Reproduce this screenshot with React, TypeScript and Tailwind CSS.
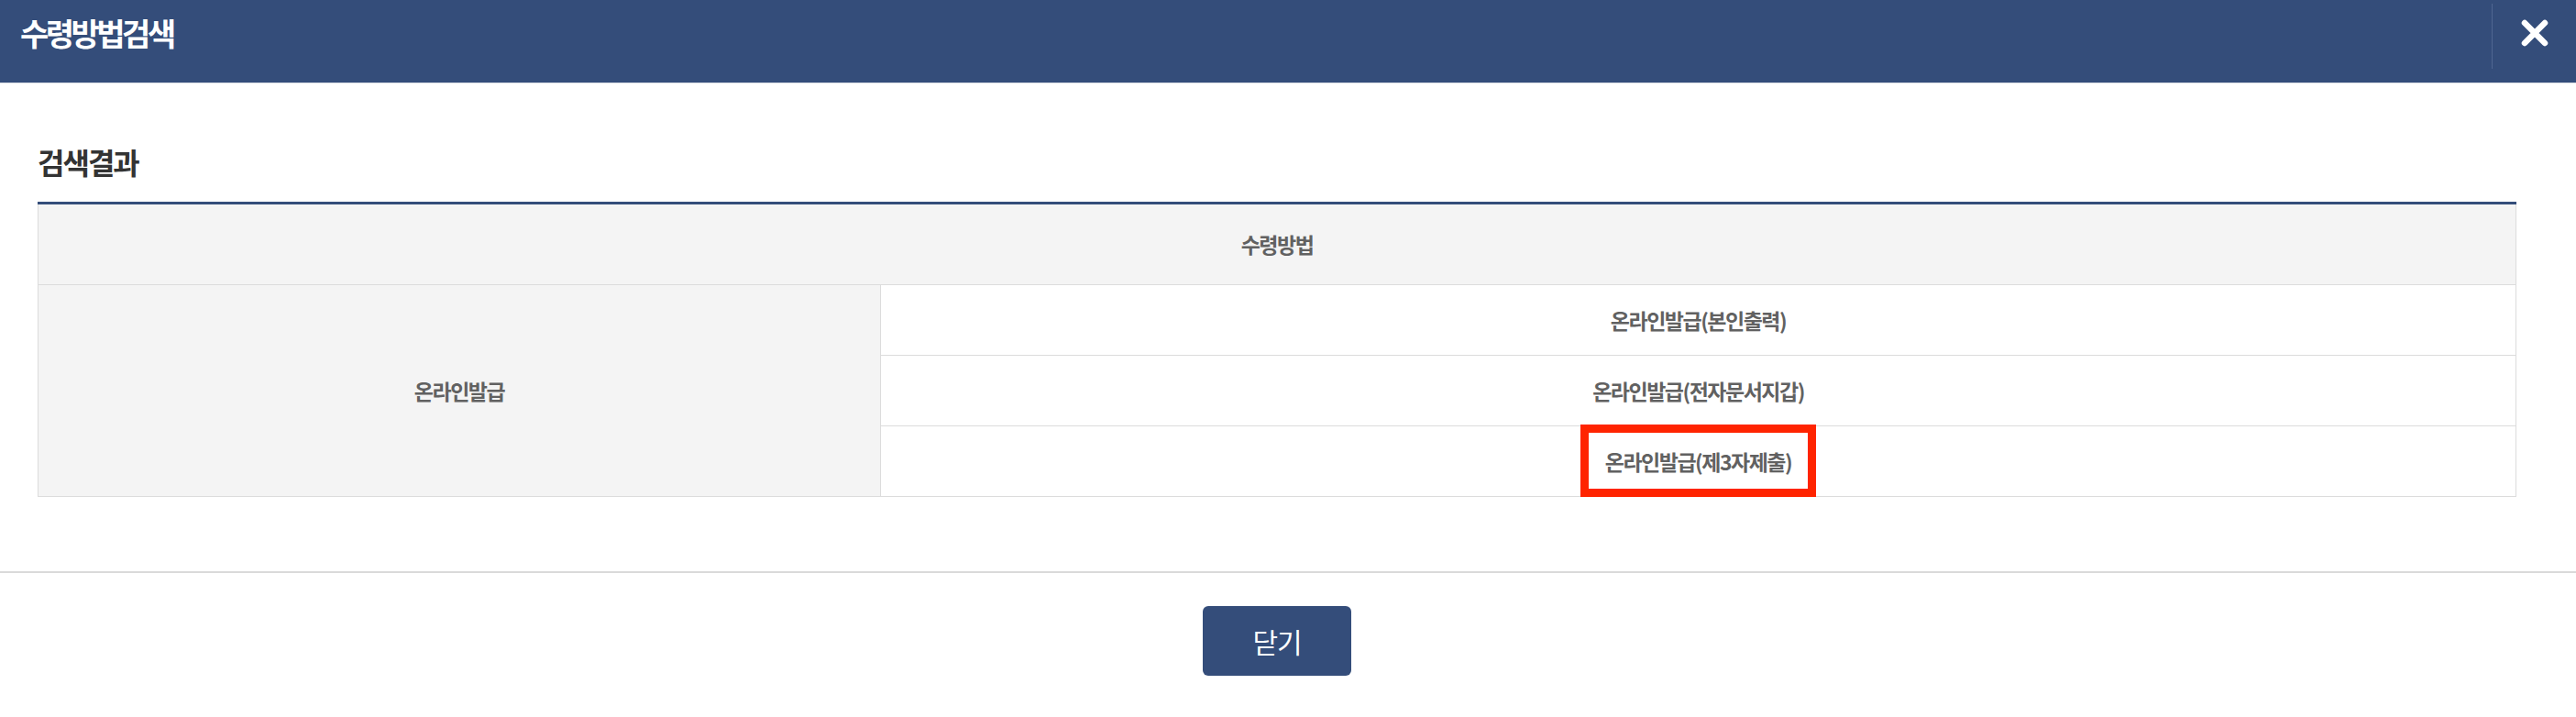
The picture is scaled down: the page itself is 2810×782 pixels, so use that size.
const font = { fontFamily: '"Noto Sans CJK KR", "Noto Sans", sans-serif' }

const methods = ['온라인발급(본인출력)', '온라인발급(전자문서지갑)', '온라인발급(제3자제출)']

function CloseIcon() {
  return (
    <svg width="32" height="32" viewBox="0 0 32 32" fill="none">
      <path d="M5 5L27 27M27 5L5 27" stroke="white" strokeWidth="6.5" strokeLinecap="round" />
    </svg>
  )
}

export default function App() {
  return (
    <div className="flex h-[782px] w-[2810px] flex-col bg-white" style={font}>
      <header className="flex h-[91px] shrink-0 items-start justify-between border-b border-[#d9dde4] bg-[#344d7a]">
        <h1 className="pl-[22px] pt-[10px] text-[34px] leading-[52px] font-bold tracking-[-3.5px] text-white">
          수령방법검색
        </h1>
        <button className="mt-[4px] flex h-[71px] w-[92px] items-center justify-center border-l border-[#4f6691] pb-[8px]">
          <CloseIcon />
        </button>
      </header>

      <section className="px-[41px] pt-[62px]">
        <h2 className="mb-[20px] text-[32px] leading-[47px] font-bold tracking-[-2px] text-[#333]">검색결과</h2>
        <table className="w-[2704px] table-fixed border-collapse border-t-[3px] border-t-[#344d7a] text-[23px] font-bold tracking-[-1.5px] text-[#616161]">
          <colgroup>
            <col className="w-[919px]" />
            <col />
          </colgroup>
          <thead>
            <tr className="h-[89px] bg-[#f4f4f4]">
              <th colSpan={2} className="border border-t-0 border-[#dcdcdc] font-bold">
                수령방법
              </th>
            </tr>
          </thead>
          <tbody>
            {methods.map((m, i) => (
              <tr key={m} className="h-[77px]">
                {i === 0 && (
                  <td rowSpan={3} className="border border-[#dcdcdc] bg-[#f4f4f4] text-center">
                    온라인발급
                  </td>
                )}
                <td className="border border-[#dcdcdc] text-center">
                  {i === 2 ? (
                    <span className="relative inline-block">
                      {m}
                      <span className="absolute -top-[23px] -right-[27px] -bottom-[22px] -left-[27px] border-[9px] border-[#ff2400]" />
                    </span>
                  ) : (
                    m
                  )}
                </td>
              </tr>
            ))}
          </tbody>
        </table>
      </section>

      <footer className="mt-[81px] flex justify-center border-t-2 border-[#dadada] pt-[36px] pr-[24px]">
        <button className="h-[76px] w-[162px] rounded-[6px] bg-[#344d7a] text-[30px] tracking-[-1px] text-white">
          닫기
        </button>
      </footer>
    </div>
  )
}
